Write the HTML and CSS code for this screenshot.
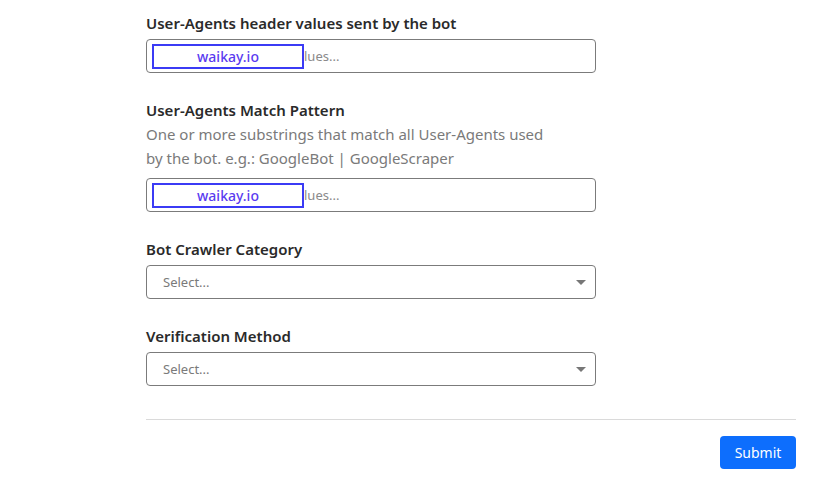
FILE: index.html
```html
<!DOCTYPE html>
<html>
<head>
<meta charset="utf-8">
<link rel="stylesheet" href="styles.css">
</head>
<body>
<div class="page">
  <div class="field">
    <div class="label">User-Agents header values sent by the bot</div>
    <div class="input">
      <span class="tag">waikay.io</span><span class="ph">lues...</span>
    </div>
  </div>
  <div class="field">
    <div class="label label-desc">User-Agents Match Pattern</div>
    <div class="desc">One or more substrings that match all User-Agents used<br>by the bot. e.g.: GoogleBot | GoogleScraper</div>
    <div class="input">
      <span class="tag">waikay.io</span><span class="ph">lues...</span>
    </div>
  </div>
  <div class="field">
    <div class="label">Bot Crawler Category</div>
    <div class="select"><span class="sel-ph">Select...</span><span class="caret"></span></div>
  </div>
  <div class="field">
    <div class="label">Verification Method</div>
    <div class="select"><span class="sel-ph">Select...</span><span class="caret"></span></div>
  </div>
  <div class="divider"></div>
  <div class="actions"><button class="submit">Submit</button></div>
</div>
</body>
</html>
```
FILE: styles.css
```css
html, body { margin: 0; padding: 0; background: #fff; }
body { font-family: "Noto Sans", "Open Sans", sans-serif; color: #212529; }
.page { width: 650px; margin-left: 146px; padding-top: 11px; }
.field { margin-bottom: 25px; }
.label { font-size: 15px; font-weight: 600; line-height: 24px; margin-bottom: 4px; color: #2a2a2a; }
.label-desc { margin-bottom: 0; }
.desc { font-size: 15px; line-height: 24px; color: #7a7a7a; margin-bottom: 8px; }
.input { width: 450px; height: 34px; box-sizing: border-box; border: 1px solid #7b7b7b; border-radius: 4px; display: flex; align-items: center; padding-left: 5px; }
.tag { width: 152px; height: 25px; box-sizing: border-box; border: 2px solid #3b3bf5; color: #5a3bf0; font-size: 14px; font-weight: 500; display: flex; align-items: center; justify-content: center; }
.ph { font-size: 13px; color: #8a8a8a; }
.select { width: 450px; height: 34px; box-sizing: border-box; border: 1px solid #7b7b7b; border-radius: 4px; display: flex; align-items: center; justify-content: space-between; padding: 0 9px 0 16px; }
.sel-ph { font-size: 13px; color: #7a7a7a; }
.caret { width: 0; height: 0; border-left: 5px solid transparent; border-right: 5px solid transparent; border-top: 5px solid #777; }
.divider { height: 1px; background: #dadada; margin-top: 33px; }
.actions { display: flex; justify-content: flex-end; margin-top: 16px; }
.submit { background: #0d6efd; color: #fff; border: none; border-radius: 4px; font-family: inherit; font-size: 14px; width: 76px; height: 33px; padding: 0; }
```
